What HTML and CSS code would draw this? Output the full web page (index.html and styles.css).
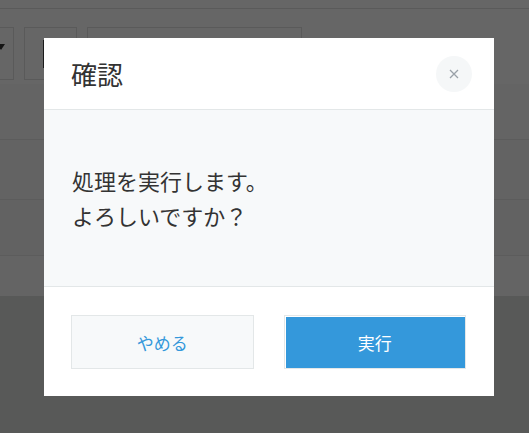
FILE: index.html
```html
<!DOCTYPE html>
<html lang="ja">
<head>
    <meta charset="UTF-8">
    <meta name="viewport" content="width=device-width, initial-scale=1.0">
    <title>確認</title>
    <link rel="stylesheet" href="styles.css">
</head>
<body>
    <div class="page">
        <div class="topbar"></div>
        <div class="toolbar">
            <div class="tool tool-first"><span class="caret"></span></div>
            <div class="tool tool-icon"><span class="bar"></span></div>
            <div class="tool tool-search"></div>
        </div>
        <div class="list">
            <div class="row row-a"></div>
            <div class="row row-b"></div>
            <div class="row row-c"></div>
            <div class="row row-d"></div>
        </div>
        <div class="page-footer"></div>
    </div>

    <div class="overlay"></div>

    <div class="dialog" role="dialog">
        <div class="dialog-header">
            <h2 class="dialog-title">確認</h2>
            <button class="close-button" aria-label="閉じる">
                <svg width="10" height="10" viewBox="0 0 10 10">
                    <path d="M1 1 L9 9 M9 1 L1 9" stroke="#9aa1a8" stroke-width="1.3" fill="none"/>
                </svg>
            </button>
        </div>
        <div class="dialog-body">
            <p>処理を実行します。<br>よろしいですか？</p>
        </div>
        <div class="dialog-footer">
            <button class="btn btn-cancel">やめる</button>
            <button class="btn btn-ok">実行</button>
        </div>
    </div>
</body>
</html>
```

FILE: styles.css
```css
body {
    margin: 0;
    font-family: "Noto Sans CJK JP", "Noto Sans", sans-serif;
    background: #dcdedd;
    height: 433px;
    overflow: hidden;
}
.page {
    background: #fff;
}
.topbar {
    height: 8px;
    border-bottom: 1px solid #e2e2e2;
}
.toolbar {
    display: flex;
    gap: 10px;
    padding: 18px 0 0 0;
    margin-left: -20px;
    height: 53px;
}
.tool {
    border: 1px solid #e0e0e0;
    height: 51px;
    position: relative;
}
.tool-first {
    width: 32px;
}
.caret {
    position: absolute;
    right: 8px;
    top: 16px;
    width: 0;
    height: 0;
    border-left: 4px solid transparent;
    border-right: 4px solid transparent;
    border-top: 6px solid #333;
}
.tool-icon {
    width: 51px;
}
.bar {
    position: absolute;
    left: 18px;
    top: 12px;
    width: 4px;
    height: 28px;
    background: #444;
}
.tool-search {
    width: 213px;
}
.list {
    margin-top: 4px;
}
.row {
    border-bottom: 1px solid #e6e6e6;
}
.row-a {
    height: 55px;
    background: #fbfbfb;
}
.row-b {
    height: 59px;
    background: #f7f7f7;
}
.row-c {
    height: 55px;
    background: #f4f4f4;
}
.row-d {
    height: 40px;
    border-bottom: none;
    background: #fbfbfb;
}
.page-footer {
    height: 140px;
    background: #dcdedd;
}
.overlay {
    position: fixed;
    inset: 0;
    background: rgba(0, 0, 0, 0.6);
}
.dialog {
    position: fixed;
    left: 44px;
    top: 38px;
    width: 450px;
    background: #fff;
}
.dialog-header {
    display: flex;
    align-items: center;
    justify-content: space-between;
    height: 71px;
    padding: 0 22px 0 27px;
    border-bottom: 1px solid #e3e7e8;
}
.dialog-title {
    margin: 0;
    font-size: 26px;
    font-weight: normal;
    color: #333;
}
.close-button {
    width: 36px;
    height: 36px;
    border: none;
    border-radius: 50%;
    background: #f5f7f8;
    display: flex;
    align-items: center;
    justify-content: center;
    padding: 0;
    cursor: pointer;
}
.dialog-body {
    background: #f7f9fa;
    height: 176px;
    padding: 0 28px;
    display: flex;
    align-items: center;
    border-bottom: 1px solid #e3e7e8;
}
.dialog-body p {
    margin: 0;
    font-size: 22px;
    line-height: 35px;
    color: #333;
}
.dialog-footer {
    display: flex;
    gap: 30px;
    padding: 28px 28px 27px 27px;
}
.btn {
    flex: 1;
    height: 54px;
    font-family: inherit;
    font-size: 17px;
    cursor: pointer;
    border: 1px solid #e3e7e8;
}
.btn-cancel {
    background: #f7f9fa;
    color: #3498db;
}
.btn-ok {
    background: #3498db;
    color: #fff;
    box-shadow: inset 1px 1px 0 #fff;
}
```
